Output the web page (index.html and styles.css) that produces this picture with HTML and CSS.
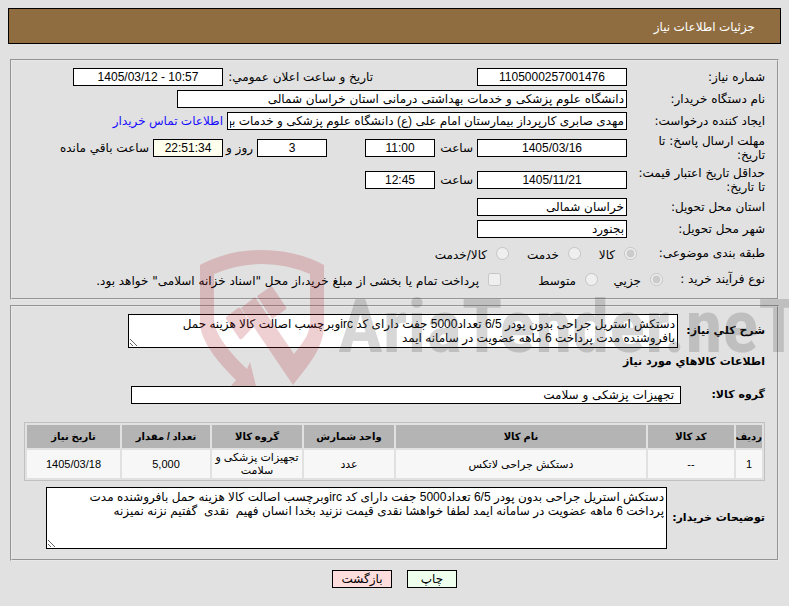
FILE: index.html
```html
<!DOCTYPE html>
<html lang="fa" dir="rtl">
<head>
  <meta charset="UTF-8">
  <meta name="viewport" content="width=device-width, initial-scale=1.0">
  <title>جزئیات اطلاعات نیاز</title>
  <link rel="stylesheet" href="styles.css">
</head>
<body>
  <h1 class="page-title">جزئیات اطلاعات نیاز</h1>

  <form class="need-form">
    <fieldset class="box">
      <div class="row">
        <label class="caption" for="need-no">شماره نیاز:</label>
        <div class="first"><input class="field w150 center" id="need-no" type="text" value="1105000257001476" readonly></div>
        <label class="announce" for="announce">تاریخ و ساعت اعلان عمومي:</label>
        <input class="field w150 center" id="announce" dir="ltr" type="text" value="1405/03/12 - 10:57" readonly>
      </div>
      <div class="row">
        <label class="caption" for="buyer">نام دستگاه خریدار:</label>
        <input class="field w450" id="buyer" type="text" value="دانشگاه علوم پزشکی و خدمات بهداشتی درمانی استان خراسان شمالی" readonly>
      </div>
      <div class="row">
        <label class="caption" for="creator">ایجاد کننده درخواست:</label>
        <input class="field w400 narrow" id="creator" type="text" value="مهدی صابری کارپرداز بیمارستان امام علی (ع) دانشگاه علوم پزشکی و خدمات بهداشتی درمانی" readonly>
        <a href="#contact">اطلاعات تماس خریدار</a>
      </div>
      <div class="row tall">
        <label class="caption" for="deadline">مهلت ارسال پاسخ: تا<br>تاریخ:</label>
        <div class="first wide">
          <input class="field w150 center" id="deadline" type="text" value="1405/03/16" readonly>
          <label class="hour" for="deadline-hour">ساعت</label>
          <input class="field w70 center" id="deadline-hour" type="text" value="11:00" readonly>
        </div>
        <input class="field w70 center" id="days" type="text" value="3" readonly>
        <label class="days" for="days">روز و</label>
        <input class="field w70 center timer" id="timer" type="text" value="22:51:34" readonly>
        <label for="timer">ساعت باقي مانده</label>
      </div>
      <div class="row tall">
        <label class="caption" for="valid">حداقل تاریخ اعتبار قیمت:<br>تا تاریخ:</label>
        <input class="field w150 center" id="valid" type="text" value="1405/11/21" readonly>
        <label class="hour" for="valid-hour">ساعت</label>
        <input class="field w70 center" id="valid-hour" type="text" value="12:45" readonly>
      </div>
      <div class="row">
        <label class="caption" for="province">استان محل تحویل:</label>
        <input class="field w150" id="province" type="text" value="خراسان شمالی" readonly>
      </div>
      <div class="row">
        <label class="caption" for="city">شهر محل تحویل:</label>
        <input class="field w150" id="city" type="text" value="بجنورد" readonly>
      </div>
      <div class="row options">
        <span class="caption subject">طبقه بندی موضوعی:</span>
        <label class="option"><input type="radio" name="subject" checked disabled><span>کالا</span></label>
        <label class="option long"><input type="radio" name="subject" disabled><span>خدمت</span></label>
        <label class="option"><input type="radio" name="subject" disabled><span>کالا/خدمت</span></label>
      </div>
      <div class="row options">
        <span class="caption process">نوع فرآیند خرید :</span>
        <label class="option medium"><input type="radio" name="process" checked disabled><span>جزيي</span></label>
        <label class="option last"><input type="radio" name="process" disabled><span>متوسط</span></label>
        <label class="option"><input type="checkbox" disabled><span>پرداخت تمام یا بخشی از مبلغ خرید،از محل "اسناد خزانه اسلامی" خواهد بود.</span></label>
      </div>
    </fieldset>

    <fieldset class="box items">
      <div class="line">
        <label class="strong" for="summary">شرح کلي نياز:</label>
        <textarea class="field area summary" id="summary" readonly>دستکش استریل جراحی بدون پودر 6/5 تعداد5000 جفت دارای کد ircوبرچسب اصالت کالا هزینه حمل
بافروشنده مدت پرداخت 6 ماهه عضویت در سامانه ایمد</textarea>
      </div>
      <h2 class="strong heading">اطلاعات کالاهاي مورد نیاز</h2>
      <div class="line group">
        <label class="strong" for="group">گروه کالا:</label>
        <input class="field indent" id="group" type="text" value="تجهیزات پزشکی و سلامت" readonly>
      </div>
      <table class="goods">
        <colgroup>
          <col class="c-row"><col class="c-code"><col><col class="c-unit"><col class="c-unit"><col class="c-count"><col class="c-date">
        </colgroup>
        <thead>
          <tr>
            <th>ردیف</th>
            <th>کد کالا</th>
            <th>نام کالا</th>
            <th>واحد شمارش</th>
            <th>گروه کالا</th>
            <th>تعداد / مقدار</th>
            <th>تاریخ نیاز</th>
          </tr>
        </thead>
        <tbody>
          <tr>
            <td>1</td>
            <td>--</td>
            <td>دستکش جراحی لاتکس</td>
            <td>عدد</td>
            <td>تجهیزات پزشکی و<br>سلامت</td>
            <td>5,000</td>
            <td>1405/03/18</td>
          </tr>
        </tbody>
      </table>
      <div class="line">
        <label class="strong notes-label" for="notes">توضیحات خریدار:</label>
        <textarea class="field area notes" id="notes" readonly>دستکش استریل جراحی بدون پودر 6/5 تعداد5000 جفت دارای کد ircوبرچسب اصالت کالا هزینه حمل بافروشنده مدت
پرداخت 6 ماهه عضویت در سامانه ایمد لطفا خواهشا نقدی قیمت نزنید بخدا انسان فهیم  نقدی  گفتیم نزنه نمیزنه</textarea>
      </div>
    </fieldset>

    <div class="buttons">
      <button class="btn print" type="button">چاپ</button>
      <button class="btn back" type="button">بازگشت</button>
    </div>
  </form>

  <svg class="watermark" width="600" height="150" viewBox="0 0 600 150" direction="ltr" aria-hidden="true">
    <g fill="#af1923">
      <path d="M10 25Q38 10 72 10T134 25V84C134 108 120 123 103 145L51 68L65 57L104 114C114 101 120 94 120 82V34Q97 24 72 24T24 34V80C24 94 42 115 57 129L60 122L66 146H41L46 140C30 124 10 102 10 82Z"/>
      <path d="M36 77L48 68Q50 67 51 69L63 87L52 99Q50 100 49 98L36 79Z"/>
      <path d="M67 56L80 47Q82 46 83 48L96 67Q97 69 95 70L82 79Z"/>
    </g>
    <text class="brand" x="148" y="112">AriaTender.neT</text>
  </svg>
</body>
</html>
```
FILE: styles.css
```css
body {
  margin: 0;
  padding: 8px;
  position: relative;
  overflow-x: hidden;
  background: #e1e1e1;
  color: #000;
  font: 12px/14px "DejaVu Sans", sans-serif;
}

.page-title {
  margin: 0 0 15px;
  padding: 11px 25px 9px;
  border: 1px solid #000;
  background: #8f6d40;
  color: #fff;
  font-family: "Liberation Sans", "DejaVu Sans", sans-serif;
  font-size: 12px;
  font-weight: normal;
  line-height: 14px;
}

.need-form {
  margin: 0 2px;
}

.box {
  margin: 0 0 5px;
  padding: 5px 12px 6px;
  border: 2px groove #e8e8e8;
}

/* rows of the first box */
.row {
  display: flex;
  align-items: center;
  gap: 4px;
  min-height: 22px;
}

.row.tall {
  min-height: 32px;
}

.row label,
.row a {
  white-space: nowrap;
}

.caption {
  flex: 0 0 134px;
}

.first {
  display: flex;
  align-items: center;
  gap: 4px;
  width: 250px;
}

.first.wide {
  width: 296px;
}

.announce {
  width: 146px;
}

.hour {
  width: 34px;
}

.days {
  width: 26px;
}

a {
  color: #1a0dff;
  font-family: "Liberation Sans", "DejaVu Sans", sans-serif;
  text-decoration: none;
}

.field {
  box-sizing: border-box;
  height: 18px;
  margin: 0;
  padding: 0 2px;
  border: 1px solid #000;
  border-radius: 0;
  background: #fff;
  color: #000;
  font: inherit;
}

.center {
  font-family: "Liberation Sans", sans-serif;
  text-align: center;
}

.narrow {
  font-family: "Liberation Sans", "DejaVu Sans", sans-serif;
}

.w70 { width: 70px; }
.w150 { width: 150px; }
.w400 { width: 400px; }
.w450 { width: 450px; }
.timer { background: #ffffee; }

.row.options {
  gap: 0;
  min-height: 26px;
}

.subject { flex-basis: 128px; }
.process { flex-basis: 102px; }

.option {
  display: flex;
  align-items: center;
  gap: 9px;
  min-width: 56px;
}

.option.long { min-width: 72px; }
.option.medium { min-width: 65px; }
.option.last { min-width: 97px; }

.option input {
  width: 13px;
  height: 13px;
  margin: 0;
}

.option span {
  padding-top: 4px;
}

/* second box */
.items {
  padding: 7px 12px 10px;
}

.line {
  display: flex;
  align-items: center;
}

.strong {
  flex: 0 0 87px;
  margin: 0;
  font-size: 11px;
  font-weight: bold;
}

.strong.notes-label {
  flex-basis: 98px;
}

.heading {
  padding: 7px 0;
}

.area {
  font-family: "Liberation Sans", "DejaVu Sans", sans-serif;
  line-height: 14px;
  padding: 2px;
  resize: both;
  overflow: hidden;
}

.summary {
  width: 550px;
  height: 34px;
}

.line.group {
  margin: 10px 0 18px;
}

.group .strong {
  flex-basis: 84px;
}

.indent {
  width: 550px;
  padding: 0 6px;
}

.goods {
  width: 100%;
  margin-bottom: 6px;
  table-layout: fixed;
  border: 1px solid #c0c0c0;
  border-collapse: separate;
  border-spacing: 2px;
  font-family: "Liberation Sans", "DejaVu Sans", sans-serif;
  font-size: 11px;
  line-height: 13px;
  text-align: center;
}

.goods th,
.goods td {
  padding: 0;
  white-space: nowrap;
}

.goods th {
  height: 23px;
  background: #b4b4b4;
  font-size: 10px;
}

.goods td {
  height: 28px;
  background: #f7f7f7;
}

.c-row { width: 26px; }
.c-code { width: 86px; }
.c-unit { width: 90px; }
.c-count { width: 88px; }
.c-date { width: 93px; }

.notes {
  width: 621px;
  height: 62px;
}

.buttons {
  display: flex;
  justify-content: center;
  gap: 15px;
  padding-top: 4px;
}

.btn {
  height: 18px;
  padding: 0;
  border: 1px solid #000;
  font: inherit;
}

.print {
  width: 50px;
  background: #eeffee;
}

.back {
  width: 60px;
  background: #ffdddd;
}

/* brand mark laid over the whole form */
.watermark {
  position: absolute;
  top: 240px;
  left: 190px;
  opacity: 0.2;
  pointer-events: none;
}

.brand {
  fill: #3c3c3c;
  font: bold 75px "Roboto Condensed", sans-serif;
}
```
